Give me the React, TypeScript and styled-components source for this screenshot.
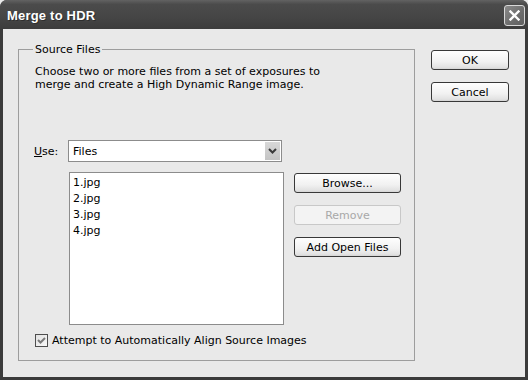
import React from 'react'
import styled, { createGlobalStyle } from 'styled-components'

const GlobalStyle = createGlobalStyle`
  html, body {
    margin: 0;
    padding: 0;
    background: #e9e9e9;
  }
  body {
    font-family: "DejaVu Sans", Verdana, sans-serif;
    font-size: 11px;
    color: #000;
  }
`

const Window = styled.div`
  width: 528px;
  height: 380px;
  display: flex;
  flex-direction: column;
  background: #3b3b3b;
  border-radius: 7px 7px 0 0;
  overflow: hidden;
`

const TitleBar = styled.div`
  height: 29px;
  flex-shrink: 0;
  display: flex;
  align-items: center;
  justify-content: space-between;
  padding: 0 3px 0 7px;
  background: linear-gradient(#626262 0%, #4b4b4b 15%, #454545 60%, #3c3c3c 100%);
`

const Title = styled.div`
  font-family: "Liberation Sans", Arial, sans-serif;
  font-weight: bold;
  font-size: 13px;
  letter-spacing: 0.2px;
  color: #fff;
  text-shadow: 1px 1px 0 #2e2e2e;
  padding-top: 2px;
`

const CloseButton = styled.div`
  width: 21px;
  height: 21px;
  box-sizing: border-box;
  margin-top: 1px;
  border: 1px solid #d8d8d8;
  border-radius: 3px;
  background: linear-gradient(135deg, #8a8a8a, #6c6c6c 60%, #5f5f5f);
  display: flex;
  align-items: center;
  justify-content: center;
`

const Body = styled.div`
  flex: 1;
  margin: 0 3px 3px 3px;
  background: #e9e9e9;
  display: flex;
  align-items: flex-start;
  gap: 16px;
  padding: 14px 16px 0 15px;
`

const GroupBox = styled.fieldset`
  margin: 0;
  width: 397px;
  box-sizing: border-box;
  border: 1px solid #9d9d9d;
  padding: 9px 12px 13px 16px;
  min-width: 0;
`

const Legend = styled.legend`
  padding: 0 2px;
  margin-left: -2px;
  line-height: 13px;
`

const Description = styled.p`
  margin: 0;
  line-height: 13px;
`

const UseRow = styled.div`
  display: flex;
  align-items: center;
  margin-top: 49px;
`

const Label = styled.label`
  width: 34px;
  margin-left: -1px;
  flex-shrink: 0;
  span { text-decoration: underline; }
`

const Select = styled.div`
  width: 214px;
  height: 22px;
  box-sizing: border-box;
  border: 1px solid #8c8c8c;
  background: #fff;
  display: flex;
  align-items: center;
  justify-content: space-between;
  padding: 1px;
`

const SelectValue = styled.span`
  padding-left: 3px;
`

const ArrowBox = styled.div`
  width: 15px;
  height: 18px;
  background: linear-gradient(#d8d8d8, #c4c4c4);
  display: flex;
  align-items: center;
  justify-content: center;
`

const FilesRow = styled.div`
  display: flex;
  align-items: flex-start;
  margin: 10px 0 0 34px;
  gap: 10px;
`

const ListBox = styled.ul`
  margin: 0;
  list-style: none;
  width: 215px;
  height: 153px;
  box-sizing: border-box;
  border: 1px solid #8c8c8c;
  background: #fff;
  padding: 2px 3px;
`

const ListItem = styled.li`
  line-height: 16px;
`

const SideButtons = styled.div`
  display: flex;
  flex-direction: column;
  gap: 12px;
  padding-top: 1px;
`

const Button = styled.button<{ $width: number }>`
  width: ${p => p.$width}px;
  height: 20px;
  box-sizing: border-box;
  padding: 0;
  font-family: "DejaVu Sans", Verdana, sans-serif;
  font-size: 11px;
  color: #000;
  border: 1px solid #383838;
  border-radius: 3px;
  background: linear-gradient(#fefefe, #f1f1f1 60%, #e2e2e2 90%, #d4d4d4);

  &:disabled {
    color: #a8a8a8;
    border-color: #c8c8c8;
    background: #f3f3f3;
  }
`

const CheckRow = styled.div`
  display: flex;
  align-items: center;
  margin-top: 9px;
  gap: 4px;
`

const CheckBox = styled.div`
  width: 13px;
  height: 13px;
  box-sizing: border-box;
  border: 1px solid #4e4e4e;
  background: linear-gradient(135deg, #e2e2e2, #f8f8f8);
  display: flex;
  align-items: center;
  justify-content: center;
`

const RightColumn = styled.div`
  display: flex;
  flex-direction: column;
  gap: 12px;
  margin-top: 7px;
`

const files = ['1.jpg', '2.jpg', '3.jpg', '4.jpg']

const App = () => {
  return (
    <Window>
      <GlobalStyle />
      <TitleBar>
        <Title>Merge to HDR</Title>
        <CloseButton>
          <svg width="11" height="11" viewBox="0 0 11 11">
            <path d="M1.5 1.5 L9.5 9.5 M9.5 1.5 L1.5 9.5" stroke="#fff" strokeWidth="2.4" strokeLinecap="square" />
          </svg>
        </CloseButton>
      </TitleBar>
      <Body>
        <GroupBox>
          <Legend>Source Files</Legend>
          <Description>
            Choose two or more files from a set of exposures to
            <br />
            merge and create a High Dynamic Range image.
          </Description>
          <UseRow>
            <Label><span>U</span>se:</Label>
            <Select>
              <SelectValue>Files</SelectValue>
              <ArrowBox>
                <svg width="9" height="6" viewBox="0 0 9 6">
                  <path d="M1 1 L4.5 4.5 L8 1" stroke="#3a3a3a" strokeWidth="2" fill="none" />
                </svg>
              </ArrowBox>
            </Select>
          </UseRow>
          <FilesRow>
            <ListBox>
              {files.map(f => <ListItem key={f}>{f}</ListItem>)}
            </ListBox>
            <SideButtons>
              <Button $width={107}>Browse...</Button>
              <Button $width={107} disabled>Remove</Button>
              <Button $width={107}>Add Open Files</Button>
            </SideButtons>
          </FilesRow>
          <CheckRow>
            <CheckBox>
              <svg width="9" height="9" viewBox="0 0 9 9">
                <path d="M1 4 L3.5 6.5 L8 2" stroke="#7a7a7a" strokeWidth="2" fill="none" />
              </svg>
            </CheckBox>
            <span>Attempt to Automatically Align Source Images</span>
          </CheckRow>
        </GroupBox>
        <RightColumn>
          <Button $width={78}>OK</Button>
          <Button $width={78}>Cancel</Button>
        </RightColumn>
      </Body>
    </Window>
  )
}

export default App
